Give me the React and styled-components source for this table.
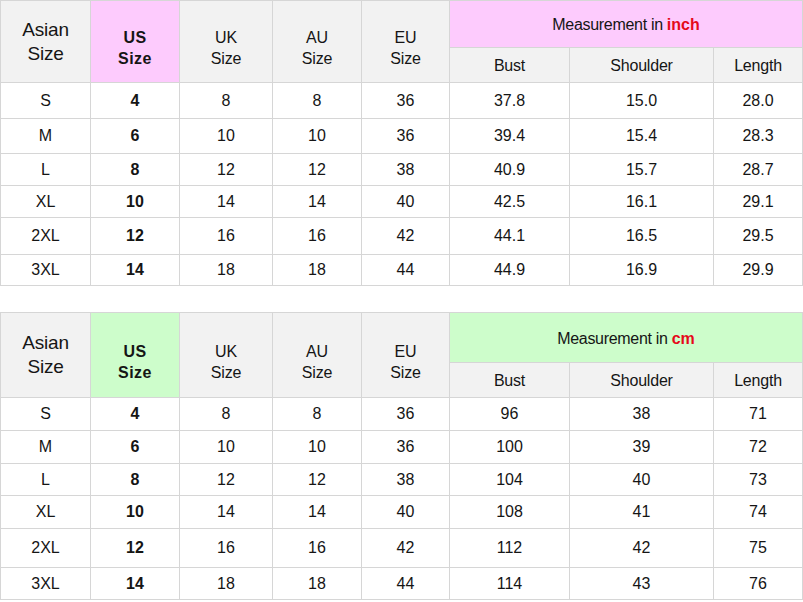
import React from 'react'
import styled, { createGlobalStyle } from 'styled-components'

const Global = createGlobalStyle`
  html, body { margin: 0; padding: 0; background: #fff; }
  body { font-family: "Liberation Sans", Arial, sans-serif; color: #151515; }
`

const charts = [
  {
    unit: 'inch',
    tint: '#fdcbfd',
    rows: '46px 34px 35px 34px 31px 31px 36px 30px',
    data: [
      ['S', '4', '8', '8', '36', '37.8', '15.0', '28.0'],
      ['M', '6', '10', '10', '36', '39.4', '15.4', '28.3'],
      ['L', '8', '12', '12', '38', '40.9', '15.7', '28.7'],
      ['XL', '10', '14', '14', '40', '42.5', '16.1', '29.1'],
      ['2XL', '12', '16', '16', '42', '44.1', '16.5', '29.5'],
      ['3XL', '14', '18', '18', '44', '44.9', '16.9', '29.9'],
    ],
  },
  {
    unit: 'cm',
    tint: '#cdfdcb',
    rows: '49px 34px 32px 32px 31px 32px 38px 31px',
    data: [
      ['S', '4', '8', '8', '36', '96', '38', '71'],
      ['M', '6', '10', '10', '36', '100', '39', '72'],
      ['L', '8', '12', '12', '38', '104', '40', '73'],
      ['XL', '10', '14', '14', '40', '108', '41', '74'],
      ['2XL', '12', '16', '16', '42', '112', '42', '75'],
      ['3XL', '14', '18', '18', '44', '114', '43', '76'],
    ],
  },
]

export default function App() {
  return (
    <Page>
      <Global />
      {charts.map((chart) => (
        <Chart key={chart.unit} $rows={chart.rows}>
          <HeadCell $span2 $big>Asian<br />Size</HeadCell>
          <HeadCell $span2 $bg={chart.tint} $bold>US<br />Size</HeadCell>
          <HeadCell $span2>UK<br />Size</HeadCell>
          <HeadCell $span2>AU<br />Size</HeadCell>
          <HeadCell $span2>EU<br />Size</HeadCell>
          <Measure $bg={chart.tint}>
            Measurement in <Unit>{chart.unit}</Unit>
          </Measure>
          <HeadCell>Bust</HeadCell>
          <HeadCell>Shoulder</HeadCell>
          <HeadCell>Length</HeadCell>
          {chart.data.map((row) =>
            row.map((val, i) => (
              <Cell key={row[0] + i} $bold={i === 1}>
                {val}
              </Cell>
            ))
          )}
        </Chart>
      ))}
    </Page>
  )
}

const Page = styled.main`
  width: 803px;
  display: flex;
  flex-direction: column;
  gap: 26px;
`

const Chart = styled.section`
  display: grid;
  grid-template-columns: 89px 88px 92px 88px 87px 119px 143px 88px;
  grid-template-rows: ${(p) => p.$rows};
  gap: 1px;
  padding: 1px;
  background: #d6d6d6;
`

const Cell = styled.div`
  display: flex;
  align-items: center;
  justify-content: center;
  background: #fff;
  font-size: 16px;
  font-weight: ${(p) => (p.$bold ? 700 : 400)};
`

const HeadCell = styled.div`
  display: flex;
  align-items: center;
  justify-content: center;
  text-align: center;
  background: ${(p) => p.$bg || '#f2f2f2'};
  grid-row: ${(p) => (p.$span2 ? 'span 2' : 'auto')};
  font-size: ${(p) => (p.$big ? '19px' : '16px')};
  line-height: ${(p) => (p.$big ? '24px' : '21px')};
  font-weight: ${(p) => (p.$bold ? 700 : 400)};
  letter-spacing: ${(p) => (p.$bold ? '0.5px' : '-0.2px')};
  padding-top: ${(p) => (p.$span2 && !p.$big ? '13px' : '0')};
`

const Measure = styled.div`
  grid-column: span 3;
  display: flex;
  align-items: center;
  justify-content: center;
  background: ${(p) => p.$bg};
  font-size: 16px;
  letter-spacing: -0.3px;
  padding-top: 2px;
`

const Unit = styled.b`
  color: #e5091a;
  margin-left: 4px;
  letter-spacing: 0;
`
